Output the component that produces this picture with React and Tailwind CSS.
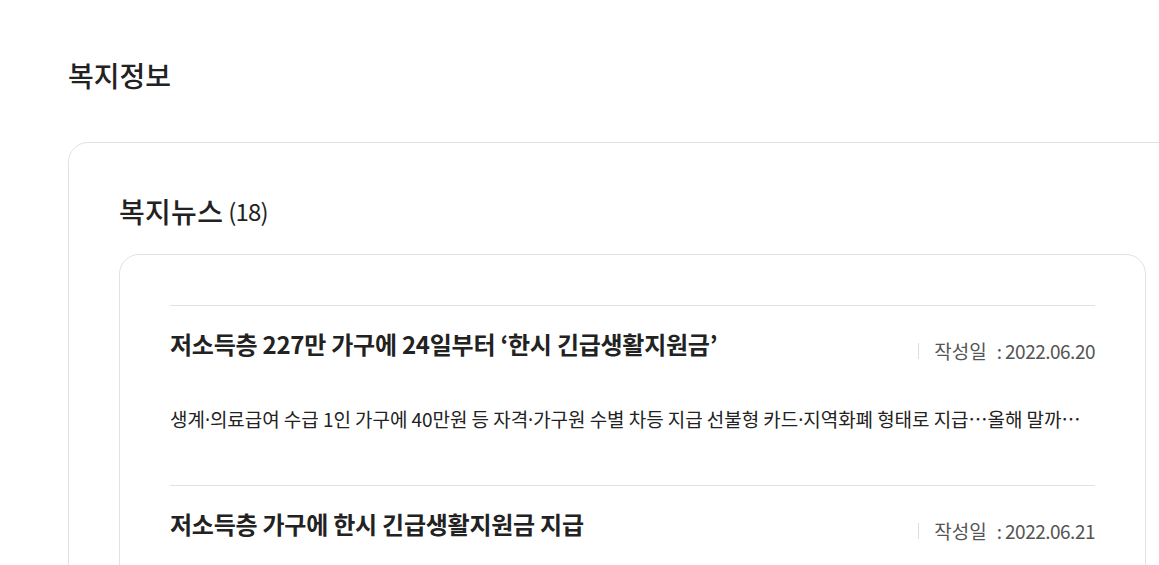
import React from "react";

const FONT = { fontFamily: '"Noto Sans CJK KR", "Noto Sans", sans-serif' };

const news = [
    {
        id: 1,
        title: "저소득층 227만 가구에 24일부터 ‘한시 긴급생활지원금’",
        date: "2022.06.20",
        summary: "생계·의료급여 수급 1인 가구에 40만원 등 자격·가구원 수별 차등 지급 선불형 카드·지역화폐 형태로 지급…올해 말까…",
    },
    {
        id: 2,
        title: "저소득층 가구에 한시 긴급생활지원금 지급",
        date: "2022.06.21",
        summary: "",
    },
];

// 가운뎃점은 CJK 폰트에서 전각으로 나와서 좁은 폰트로 따로 처리
const withDots = (text) =>
    text.split("·").flatMap((part, i) =>
        i === 0 ? [part] : [<span key={i} style={{ fontFamily: '"Noto Sans", sans-serif' }}>·</span>, part]
    );

export default function App() {
    return (
        <div className="w-full h-[565px] overflow-hidden bg-white text-[#222]" style={FONT}>
            <div className="pl-[68px] pt-[53px]">
                <h1 className="text-[28px] font-medium leading-[44px]">복지정보</h1>

                <div className="mt-[45px] w-[1129px] border border-[#e2e2e2] rounded-[20px] px-[50px] pt-[50px] pb-[50px]">
                    <h2 className="flex items-center text-[28px] font-medium leading-[36px] tracking-[0.3px]">
                        복지뉴스<span className="ml-[5px] text-[24px] font-normal tracking-[-0.8px]">(18)</span>
                    </h2>

                    <div className="mt-[25px] border border-[#e2e2e2] rounded-[20px] px-[50px] pt-[50px]">
                        <ul>
                            {news.map(n => (
                                <li key={n.id} className="border-t border-[#e2e2e2] h-[180px] pt-[20px]">
                                    <div className="flex items-start justify-between">
                                        <p className="text-[24px] font-bold leading-[36px] tracking-[-0.25px]">{n.title}</p>
                                        <div className="mt-[11px] flex items-center text-[19px] text-[#555] leading-[28px]">
                                            <span className="w-px h-[16px] bg-[#ddd] mr-[15px]"></span>
                                            <span>작성일</span>
                                            <span className="ml-[10px] mr-[3px]">:</span>
                                            <span className="tracking-[-0.5px]">{n.date}</span>
                                        </div>
                                    </div>
                                    <p className="mt-[40px] text-[19px] leading-[28px] tracking-[-0.05px] whitespace-nowrap overflow-hidden text-ellipsis">
                                        {withDots(n.summary)}
                                    </p>
                                </li>
                            ))}
                        </ul>
                    </div>
                </div>
            </div>
        </div>
    );
}
